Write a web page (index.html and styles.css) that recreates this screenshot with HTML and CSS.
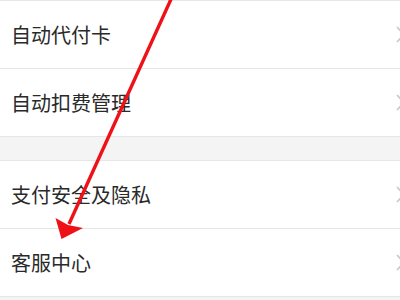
FILE: index.html
```html
<!DOCTYPE html>
<html lang="zh">
<head>
<meta charset="utf-8">
<link rel="stylesheet" href="styles.css">
</head>
<body>
<div class="page">
  <div class="group">
    <div class="row"><span class="label">自动代付卡</span><svg class="chev" viewBox="0 0 9 17"><path d="M1 1 L8 8.5 L1 16" fill="none" stroke="#c8c8c8" stroke-width="1.6"/></svg></div>
    <div class="row"><span class="label">自动扣费管理</span><svg class="chev" viewBox="0 0 9 17"><path d="M1 1 L8 8.5 L1 16" fill="none" stroke="#c8c8c8" stroke-width="1.6"/></svg></div>
  </div>
  <div class="gap"></div>
  <div class="group">
    <div class="row"><span class="label">支付安全及隐私</span><svg class="chev" viewBox="0 0 9 17"><path d="M1 1 L8 8.5 L1 16" fill="none" stroke="#c8c8c8" stroke-width="1.6"/></svg></div>
    <div class="row"><span class="label">客服中心</span><svg class="chev" viewBox="0 0 9 17"><path d="M1 1 L8 8.5 L1 16" fill="none" stroke="#c8c8c8" stroke-width="1.6"/></svg></div>
  </div>
  <svg class="arrow" viewBox="0 0 400 300" width="400" height="300">
    <line x1="172" y1="-3" x2="69" y2="224" stroke="#ee1118" stroke-width="3.4"/>
    <polygon points="61.5,239 55.5,218 68,225 83,228" fill="#ee1118"/>
  </svg>
</div>
</body>
</html>
```
FILE: styles.css
```css
html, body {
  margin: 0;
  padding: 0;
  width: 400px;
  height: 300px;
  overflow: hidden;
  background: #f4f4f4;
}
.page {
  position: relative;
  width: 400px;
  height: 300px;
  overflow: hidden;
  font-family: "Noto Sans CJK SC", "Noto Sans", sans-serif;
}
.group {
  background: #fff;
  border-top: 1px solid #e6e6e6;
  border-bottom: 1px solid #e6e6e6;
}
.row {
  height: 67px;
  display: flex;
  align-items: center;
  justify-content: space-between;
  padding-left: 11px;
  overflow: hidden;
}
.row + .row {
  border-top: 1px solid #e6e6e6;
}
.label {
  font-size: 20px;
  color: #2a2a2a;
  line-height: 1;
  margin-top: 1px;
}
.chev {
  width: 9px;
  height: 17px;
  margin-right: -5px;
  flex: none;
}
.gap {
  height: 23px;
}
.arrow {
  position: absolute;
  left: 0;
  top: 0;
  pointer-events: none;
}
```
